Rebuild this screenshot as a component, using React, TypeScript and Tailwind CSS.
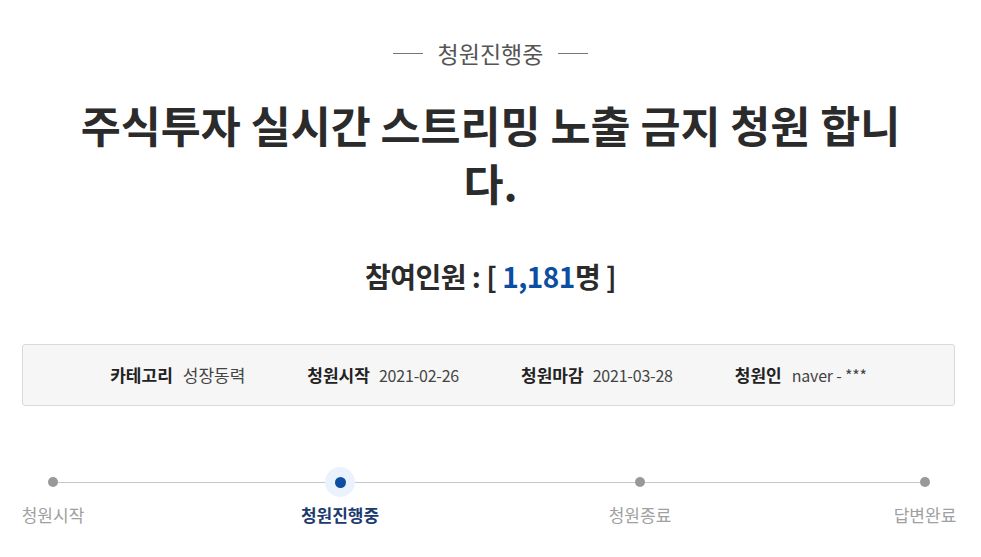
import React from "react";

const steps = [
  { label: "청원시작", active: false },
  { label: "청원진행중", active: true },
  { label: "청원종료", active: false },
  { label: "답변완료", active: false },
];

export default function App() {
  return (
    <div className="w-[981px] h-[557px] bg-white font-['Noto_Sans_CJK_KR','Noto_Sans',sans-serif] text-[#333] overflow-hidden">
      <div className="pt-[38px] flex items-center justify-center gap-[15px] text-[23px] leading-[30px] text-[#555]">
        <span className="block w-[30px] h-px bg-[#777]" />
        <span>청원진행중</span>
        <span className="block w-[30px] h-px bg-[#777]" />
      </div>

      <h1 className="mt-[28px] mx-auto w-[850px] text-center text-[43.5px] leading-[58px] font-bold text-[#2b2b2b]">
        주식투자 실시간 스트리밍 노출 금지 청원 합니다.
      </h1>

      <div className="mt-[44px] text-center text-[28px] leading-[40px] font-bold text-[#2b2b2b] tracking-[-0.5px]">
        참여인원 : [ <span className="text-[#0b4ea2]">1,181</span>명 ]
      </div>

      <div className="mt-[48px] ml-[22px] w-[933px] h-[62px] rounded-[3px] border border-[#d9d9d9] bg-[#f6f6f6] flex items-center justify-center gap-[62px] text-[17px] leading-[24px]">
        <div className="flex items-center gap-[10px]">
          <span className="font-bold text-[#222]">카테고리</span>
          <span className="text-[#444]">성장동력</span>
        </div>
        <div className="flex items-center gap-[9px]">
          <span className="font-bold text-[#222]">청원시작</span>
          <span className="text-[#444] text-[16px] tracking-[-0.2px]">2021-02-26</span>
        </div>
        <div className="flex items-center gap-[9px]">
          <span className="font-bold text-[#222]">청원마감</span>
          <span className="text-[#444] text-[16px] tracking-[-0.2px]">2021-03-28</span>
        </div>
        <div className="flex items-center gap-[10px]">
          <span className="font-bold text-[#222]">청원인</span>
          <span className="text-[#444] text-[16px] tracking-[-0.2px]">naver - ***</span>
        </div>
      </div>

      <div className="relative mt-[61px] ml-[22px] w-[934px] grid grid-cols-[62px_217px_78px_230px_62px_223px_62px]">
        <div className="absolute top-[15px] left-[31px] right-[32px] h-px bg-[#c8c8c8]" />
        {steps.map((s, i) => (
          <React.Fragment key={s.label}>
            {i > 0 && <div />}
            <div className="relative flex flex-col items-center">
              <div className="w-[30px] h-[30px] flex items-center justify-center">
                {s.active ? (
                  <div className="w-[30px] h-[30px] rounded-full bg-[#eaf3fd] flex items-center justify-center">
                    <div className="w-[11px] h-[11px] rounded-full bg-[#0b4ea2]" />
                  </div>
                ) : (
                  <div className="w-[10px] h-[10px] rounded-full bg-[#999]" />
                )}
              </div>
              <div
                className={
                  s.active
                    ? "mt-[6px] whitespace-nowrap text-[17px] leading-[24px] font-bold text-[#1c3b6e]"
                    : "mt-[6px] whitespace-nowrap text-[17px] leading-[24px] text-[#a0a0a0]"
                }
              >
                {s.label}
              </div>
            </div>
          </React.Fragment>
        ))}
      </div>
    </div>
  );
}
